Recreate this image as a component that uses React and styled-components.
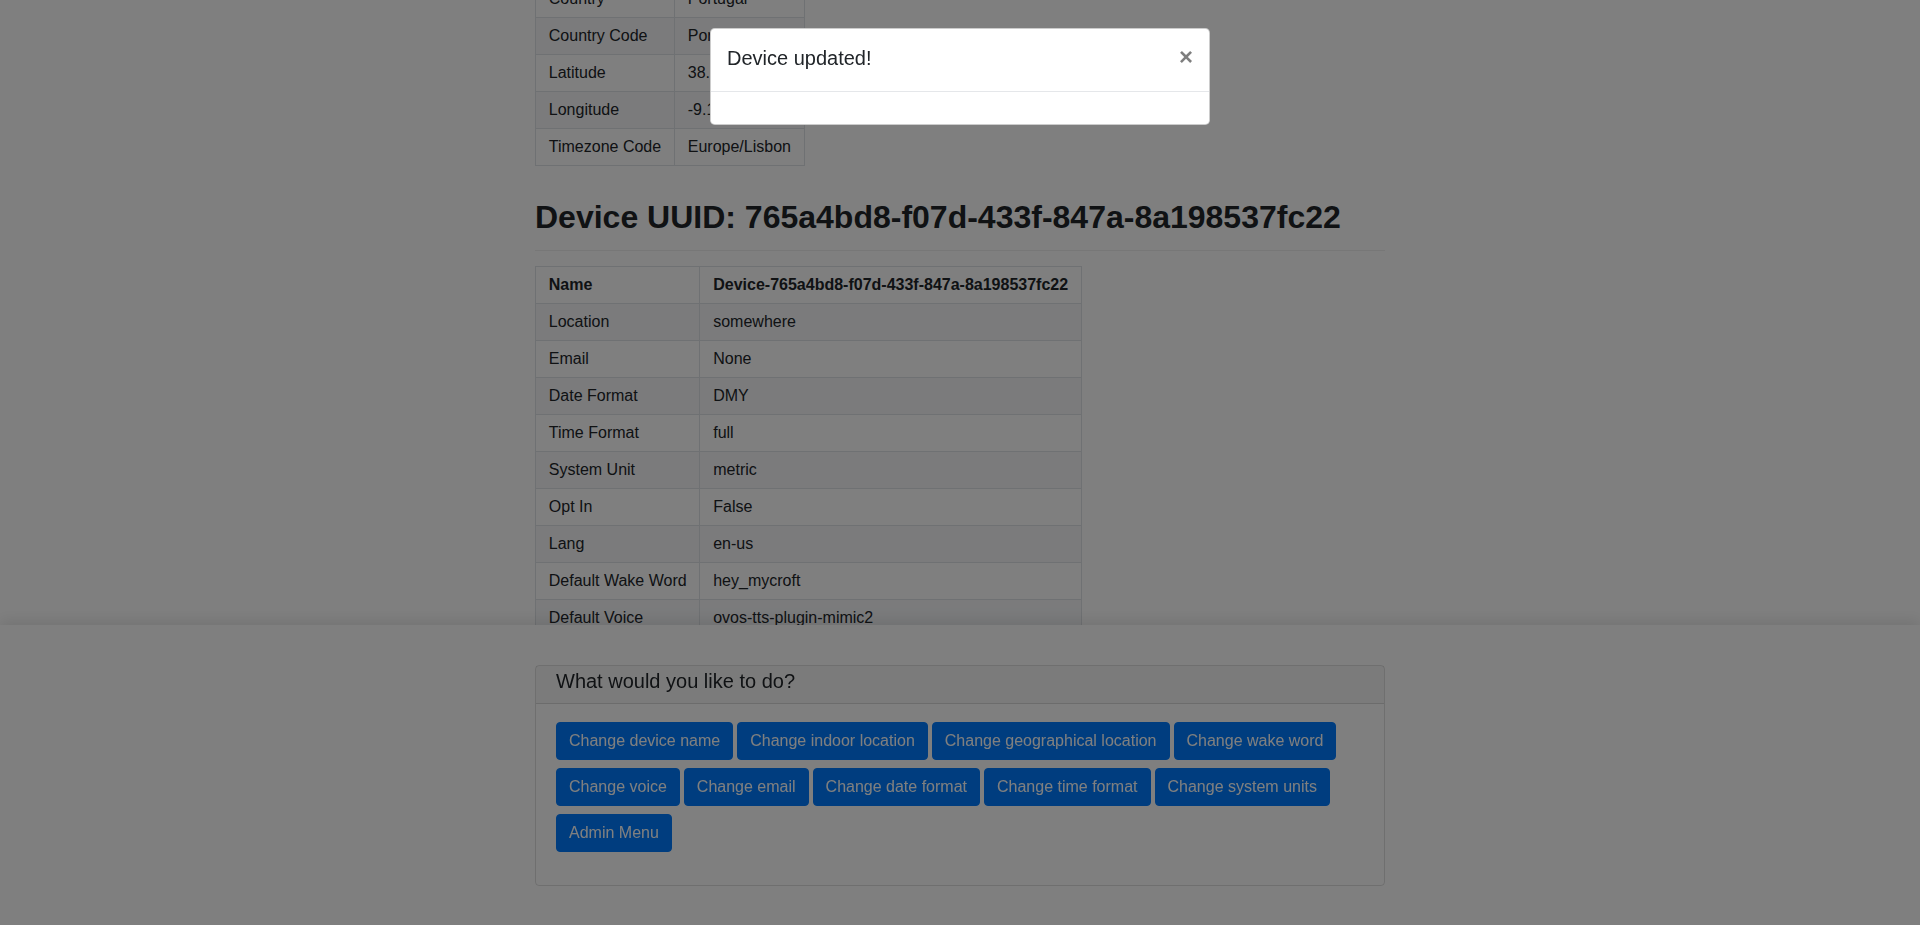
import React from 'react';
import styled, { createGlobalStyle } from 'styled-components';

const GlobalStyle = createGlobalStyle`
  html, body {
    margin: 0;
    padding: 0;
    overflow: hidden;
  }

  body {
    font-family: "Liberation Sans", Arial, Helvetica, sans-serif;
    font-size: 16px;
    line-height: 1.5;
    color: #212529;
    background-color: #fff;
  }

  * {
    box-sizing: border-box;
  }
`;

const Container = styled.main`
  width: 850px;
  margin: -20px auto 0;
`;

const InfoTable = styled.table`
  border-collapse: collapse;

  td, th {
    padding: 6px 12.8px;
    line-height: 24px;
    border: 1px solid #dee2e6;
    text-align: left;
    vertical-align: top;
    white-space: nowrap;
  }

  th {
    font-weight: bold;
  }
`;

const Row = styled.tr`
  background-color: ${props => (props.$striped ? '#f6f7f9' : '#fff')};
`;

const PageHeader = styled.h2`
  margin: 32px 0 15px;
  padding-bottom: 14px;
  border-bottom: 1px solid #eee;
  font-size: 32px;
  font-weight: bold;
  line-height: 38.4px;
`;

const Footer = styled.footer`
  position: fixed;
  left: 0;
  right: 0;
  bottom: 0;
  height: 300px;
  padding-top: 40px;
  background-color: #fff;
  box-shadow: 0 -4px 14px rgba(0, 0, 0, 0.1);
`;

const Card = styled.section`
  width: 850px;
  margin: 0 auto;
  border: 1px solid rgba(0, 0, 0, 0.125);
  border-radius: 4px;
`;

const CardHeader = styled.h5`
  margin: 0;
  padding: 3px 20px 10px;
  font-size: 20px;
  font-weight: normal;
  line-height: 24px;
  background-color: rgba(0, 0, 0, 0.03);
  border-bottom: 1px solid rgba(0, 0, 0, 0.125);
`;

const CardBody = styled.div`
  display: flex;
  flex-wrap: wrap;
  align-content: flex-start;
  gap: 8px 4px;
  padding: 18px 20px 33px;
`;

const Button = styled.button`
  padding: 6px 12px;
  font-family: inherit;
  font-size: 16px;
  line-height: 24px;
  color: #fff;
  background-color: #007bff;
  border: 1px solid #007bff;
  border-radius: 4px;
  cursor: pointer;
`;

const Backdrop = styled.div`
  position: fixed;
  inset: 0;
  background-color: #000;
  opacity: 0.5;
  z-index: 1040;
`;

const Modal = styled.div`
  position: fixed;
  top: 0;
  left: 0;
  right: 0;
  z-index: 1050;
`;

const Dialog = styled.div`
  width: 500px;
  margin: 28px auto;
  background-color: #fff;
  border: 1px solid rgba(0, 0, 0, 0.2);
  border-radius: 4.8px;
`;

const ModalHeader = styled.div`
  display: flex;
  align-items: flex-start;
  justify-content: space-between;
  padding: 16px;
  border-bottom: 1px solid #e5e7ea;
`;

const ModalTitle = styled.h5`
  margin: -2px 0 2px;
  font-size: 20px;
  font-weight: normal;
  line-height: 30px;
`;

const CloseButton = styled.button`
  margin: -16px -16px -16px auto;
  padding: 16px;
  font-family: inherit;
  font-size: 24px;
  font-weight: bold;
  line-height: 1;
  color: #000;
  text-shadow: 0 1px 0 #fff;
  opacity: 0.5;
  background: transparent;
  border: 0;
`;

const ModalBody = styled.div`
  padding: 16px;
`;

const location = [
  ['Country', 'Portugal'],
  ['Country Code', 'Portugal'],
  ['Latitude', '38.7167'],
  ['Longitude', '-9.1333'],
  ['Timezone Code', 'Europe/Lisbon'],
];

const device = [
  ['Location', 'somewhere'],
  ['Email', 'None'],
  ['Date Format', 'DMY'],
  ['Time Format', 'full'],
  ['System Unit', 'metric'],
  ['Opt In', 'False'],
  ['Lang', 'en-us'],
  ['Default Wake Word', 'hey_mycroft'],
  ['Default Voice', 'ovos-tts-plugin-mimic2'],
];

const actions = [
  'Change device name',
  'Change indoor location',
  'Change geographical location',
  'Change wake word',
  'Change voice',
  'Change email',
  'Change date format',
  'Change time format',
  'Change system units',
  'Admin Menu',
];

const uuid = '765a4bd8-f07d-433f-847a-8a198537fc22';

const App = () => (
  <>
    <GlobalStyle />
    <Container>
      <InfoTable>
        <tbody>
          {location.map(([key, value], i) => (
            <Row key={key} $striped={i % 2 === 1}>
              <td>{key}</td>
              <td>{value}</td>
            </Row>
          ))}
        </tbody>
      </InfoTable>

      <PageHeader>Device UUID: {uuid}</PageHeader>

      <InfoTable>
        <thead>
          <Row>
            <th>Name</th>
            <th>Device-{uuid}</th>
          </Row>
        </thead>
        <tbody>
          {device.map(([key, value], i) => (
            <Row key={key} $striped={i % 2 === 0}>
              <td>{key}</td>
              <td>{value}</td>
            </Row>
          ))}
        </tbody>
      </InfoTable>
    </Container>

    <Footer>
      <Card>
        <CardHeader>What would you like to do?</CardHeader>
        <CardBody>
          {actions.map(label => (
            <Button key={label} type="button">{label}</Button>
          ))}
        </CardBody>
      </Card>
    </Footer>

    <Backdrop />
    <Modal>
      <Dialog>
        <ModalHeader>
          <ModalTitle>Device updated!</ModalTitle>
          <CloseButton type="button" aria-label="Close">×</CloseButton>
        </ModalHeader>
        <ModalBody />
      </Dialog>
    </Modal>
  </>
);

export default App;
